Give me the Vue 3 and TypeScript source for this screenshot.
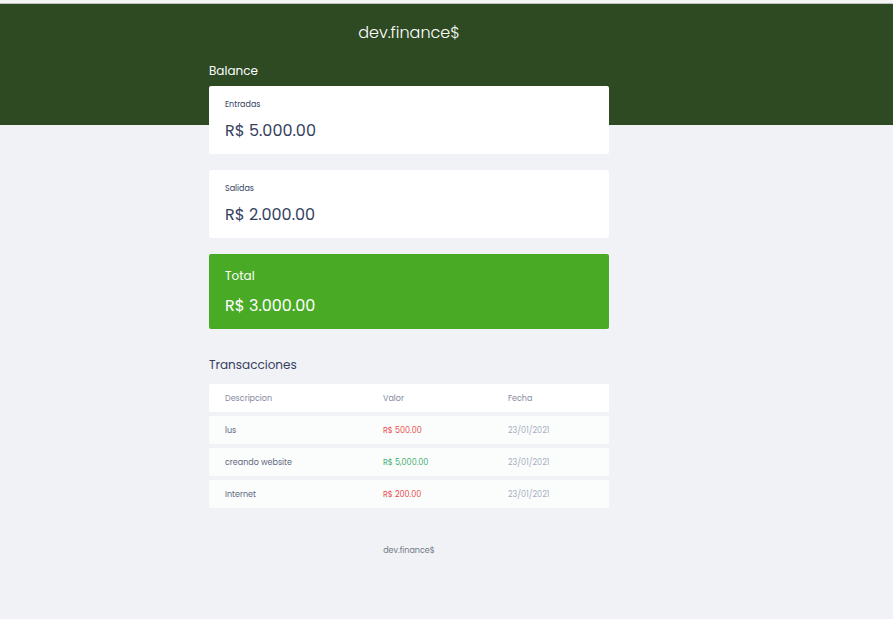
<script setup lang="ts">
interface BalanceCard {
  label: string
  amount: string
  total?: boolean
}

interface Transaction {
  description: string
  amount: string
  kind: 'income' | 'expense'
  date: string
}

const cards: BalanceCard[] = [
  { label: 'Entradas', amount: 'R$ 5.000.00' },
  { label: 'Salidas', amount: 'R$ 2.000.00' },
  { label: 'Total', amount: 'R$ 3.000.00', total: true },
]

const transactions: Transaction[] = [
  { description: 'lus', amount: 'R$ 500.00', kind: 'expense', date: '23/01/2021' },
  { description: 'creando website', amount: 'R$ 5,000.00', kind: 'income', date: '23/01/2021' },
  { description: 'Internet', amount: 'R$ 200.00', kind: 'expense', date: '23/01/2021' },
]
</script>

<template>
  <div class="page">
    <header class="header">
      <div class="logo">dev.finance$</div>
    </header>

    <main class="container">
      <section class="balance">
        <h2 class="balance-title">Balance</h2>
        <div v-for="card in cards" :key="card.label" class="card" :class="{ total: card.total }">
          <h3>{{ card.label }}</h3>
          <p>{{ card.amount }}</p>
        </div>
      </section>

      <section class="transactions">
        <h2>Transacciones</h2>
        <table>
          <thead>
            <tr>
              <th class="description">Descripcion</th>
              <th class="amount">Valor</th>
              <th>Fecha</th>
            </tr>
          </thead>
          <tbody>
            <tr v-for="item in transactions" :key="item.description">
              <td class="description">{{ item.description }}</td>
              <td :class="item.kind">{{ item.amount }}</td>
              <td class="date">{{ item.date }}</td>
            </tr>
          </tbody>
        </table>
      </section>
    </main>

    <footer class="footer">dev.finance$</footer>
  </div>
</template>

<style>
body {
  background: #f0f2f5;
}
</style>

<style scoped>
.page {
  box-sizing: border-box;
  min-height: 100vh;
  border-top: 3px solid #f5f5f6;
  background: #f0f2f5;
  color: #363f5f;
  font-family: Poppins, Inter, sans-serif;
}

h2,
h3,
p {
  margin: 0;
  font-weight: 400;
}

.header {
  box-sizing: border-box;
  height: 122px;
  padding: 17px 75px 0 0;
  border-top: 1px solid #c2c4c0;
  background: #2d4a22;
  color: #fff;
  text-align: center;
}

.logo {
  font-size: 16px;
  line-height: 24px;
  font-weight: 300;
}

.container {
  display: flex;
  flex-direction: column;
  align-items: center;
  margin-top: -64px;
  padding-right: 75px;
}

.balance,
.transactions {
  width: 100%;
  max-width: 400px;
}

.balance {
  display: flex;
  flex-direction: column;
  gap: 16px;
}

h2 {
  font-size: 12px;
  line-height: 20px;
}

.balance-title {
  margin-bottom: -11px;
  color: #fff;
}

.card {
  padding: 13px 16px 11px;
  border-radius: 2px;
  background: #fff;
}

.card h3 {
  font-size: 8px;
  line-height: 12px;
}

.card p {
  margin-top: 8px;
  font-size: 16px;
  line-height: 24px;
}

.card.total {
  padding: 12px 16px 11px;
  background: #49aa26;
  color: #fff;
}

.card.total h3 {
  font-size: 12px;
  line-height: 20px;
}

.transactions {
  margin-top: 26px;
}

table {
  width: 100%;
  margin-top: 5px;
  border-spacing: 0 4px;
  table-layout: fixed;
  text-align: left;
  font-size: 8px;
  line-height: 12px;
}

th,
td {
  padding: 9px 16px 7px;
  font-weight: 400;
}

th {
  background: #fff;
  color: #868ba2;
}

td {
  background: #fbfdfc;
}

tr > :first-child {
  border-radius: 2px 0 0 2px;
}

th.description {
  width: 126px;
}

th.amount {
  width: 93px;
}

td.description {
  color: #5e657f;
}

.income {
  color: #3dae70;
}

.expense {
  color: #e94b4b;
}

.date {
  color: #a6abbe;
}

.footer {
  padding: 33px 75px 56px 0;
  color: #737888;
  font-size: 8px;
  line-height: 12px;
  text-align: center;
}
</style>
